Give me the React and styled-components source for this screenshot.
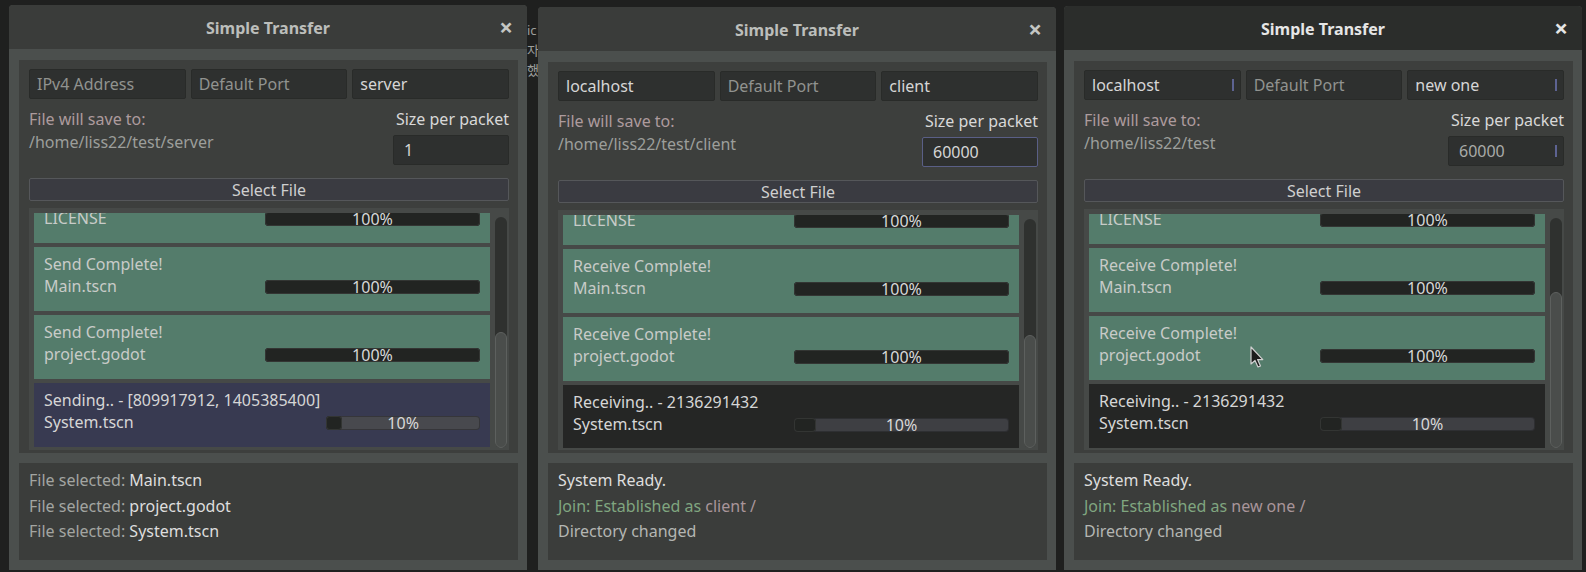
import React from "react"
import styled, { createGlobalStyle } from "styled-components"

const GlobalStyle = createGlobalStyle`
  html, body {
    margin: 0;
    padding: 0;
    background: #1f201f;
  }
  body {
    font-family: "Noto Sans", "Noto Sans CJK KR", sans-serif;
    font-size: 16px;
    color: #d0d0d0;
    overflow: hidden;
  }
  * {
    box-sizing: border-box;
  }
`

const Desktop = styled.div`
  display: flex;
  align-items: flex-start;
  width: 1586px;
  height: 572px;
  padding-left: 9px;
  background: #1f201f;
  overflow: hidden;
`

const Gap = styled.div`
  flex: none;
  width: ${p => p.$w}px;
  padding-top: 22px;
  display: flex;
  flex-direction: column;
  gap: 4px;
  font-size: 13px;
  line-height: 16px;
  color: #9c9e9b;
  overflow: hidden;
  white-space: nowrap;
`

const Window = styled.div`
  flex: none;
  width: 518px;
  height: ${p => 570 - p.$top}px;
  margin-top: ${p => p.$top}px;
  display: flex;
  flex-direction: column;
  background: #4b4f4d;
  border-radius: 4px 4px 0 0;
`

const TitleBar = styled.div`
  flex: none;
  height: 44px;
  display: grid;
  grid-template-columns: 1fr auto 1fr;
  align-items: center;
  background: ${p => (p.$active ? "#2b2d2b" : "#3a3c3a")};
  border-radius: 4px 4px 0 0;
`

const Title = styled.div`
  grid-column: 2;
  font-weight: 700;
  padding-top: 2px;
  color: ${p => (p.$active ? "#e6e6e6" : "#bcbebb")};
`

const Close = styled.div`
  justify-self: end;
  padding-right: 14px;
  font-size: 24px;
  font-weight: 700;
  line-height: 1;
  color: ${p => (p.$active ? "#e6e6e6" : "#c4c6c3")};
`

const Body = styled.div`
  flex: 1;
  min-height: 0;
  display: flex;
  flex-direction: column;
  gap: 10px;
  padding: 11px 9px 10px 10px;
`

const MainPanel = styled.div`
  flex: 1;
  min-height: 0;
  display: flex;
  flex-direction: column;
  padding: 9px 9px 3px 10px;
  background: #3d3f3d;
`

const EditRow = styled.div`
  display: grid;
  grid-template-columns: repeat(3, 1fr);
  gap: 5px;
`

const Edit = styled.div`
  height: 30px;
  display: flex;
  align-items: center;
  justify-content: space-between;
  padding: 0 6px 0 7px;
  background: #2e302f;
  border: 1px solid #292b29;
  border-radius: 2px;
  color: ${p => (p.$placeholder ? "#919390" : "#d6d6d6")};
  white-space: nowrap;
`

const Caret = styled.span`
  width: 2px;
  height: 12px;
  background: #5d6392;
`

const InfoRow = styled.div`
  margin-top: 9px;
  display: flex;
  justify-content: space-between;
  line-height: 23px;
`

const SaveInfo = styled.div`
  display: flex;
  flex-direction: column;
`

const SaveLabel = styled.div`
  color: #ad9b9d;
`

const SavePath = styled.div`
  color: #9c9e9b;
`

const PacketInfo = styled.div`
  display: flex;
  flex-direction: column;
  align-items: flex-end;
`

const PacketLabel = styled.div`
  color: #d8d8d8;
`

const SpinBox = styled(Edit)`
  width: 116px;
  margin-top: 4px;
  padding-left: 10px;
  color: ${p => (p.$dim ? "#a9aba8" : "#d6d6d6")};
  border-color: ${p => (p.$focus ? "#5a5f86" : "#292b29")};
`

const SelectButton = styled.div`
  margin-top: 13px;
  height: 23px;
  display: flex;
  align-items: center;
  justify-content: center;
  background: #3a3b41;
  border: 1px solid #55575a;
  border-radius: 2px;
  color: #cfcfcf;
`

const ListFrame = styled.div`
  flex: 1;
  min-height: 0;
  margin-top: 7px;
  display: flex;
  gap: 5px;
  padding: 5px 2px 2px 5px;
  background: #464947;
`

const Viewport = styled.div`
  flex: 1;
  min-width: 0;
  overflow: hidden;
`

const ItemList = styled.div`
  margin-top: -34px;
  display: flex;
  flex-direction: column;
  gap: 4px;
`

const itemColors = {
  done: "#547c6b",
  send: "#383a51",
  recv: "#252625",
}

const Item = styled.div`
  position: relative;
  flex: none;
  height: 64px;
  display: grid;
  grid-template-columns: 1fr 1fr;
  gap: 6px;
  padding: 0 10px;
  background: ${p => itemColors[p.$kind]};
`

const ItemText = styled.div`
  padding-top: 6px;
  line-height: 22px;
  color: ${p => (p.$kind === "done" ? "#c8cbc8" : "#d6d6d6")};
  white-space: nowrap;
`

const ItemBar = styled.div`
  padding-top: 33px;
`

const Progress = styled.div`
  display: grid;
  height: 14px;
  border-radius: 4px;
  background: ${p => (p.$kind === "send" ? "#48494e" : "#3e3f43")};
  box-shadow: inset 0 0 0 1px rgba(0, 0, 0, 0.25);
`

const Fill = styled.div`
  grid-area: 1 / 1;
  height: 14px;
  border-radius: 4px;
  background: #222422;
  box-shadow: inset 0 0 0 1px #333533;
`

const Percent = styled.div`
  grid-area: 1 / 1;
  align-self: center;
  text-align: center;
  line-height: 14px;
  color: #d8d8d8;
`

const Scrollbar = styled.div`
  flex: none;
  width: 12px;
  margin-top: 4px;
  display: flex;
  flex-direction: column;
  background: #2f312f;
  border-radius: 6px;
`

const Thumb = styled.div`
  flex: 1;
  margin-top: ${p => p.$offset}px;
  background: #4a4d4b;
  border: 1px solid #5d605e;
  border-radius: 6px;
`

const Cursor = styled.svg`
  position: absolute;
  left: ${p => p.$x}px;
  top: ${p => p.$y}px;
  width: 14px;
  height: 22px;
`

const LogPanel = styled.div`
  flex: none;
  height: 97px;
  padding: 5px 10px;
  background: #3b3d3b;
  line-height: 25.5px;
  white-space: nowrap;
`

const segColors = {
  dim: "#a3a5a2",
  strong: "#dedede",
  join: "#80a680",
  peer: "#a9959a",
  plain: "#b4b6b3",
}

const Seg = styled.span`
  color: ${p => segColors[p.$c]};
`

const sendItems = [
  { kind: "done", l1: "Send Complete!", l2: "LICENSE", pct: 100 },
  { kind: "done", l1: "Send Complete!", l2: "Main.tscn", pct: 100 },
  { kind: "done", l1: "Send Complete!", l2: "project.godot", pct: 100 },
  { kind: "send", l1: "Sending.. - [809917912, 1405385400]", l2: "System.tscn", pct: 10 },
]

const recvItems = [
  { kind: "done", l1: "Receive Complete!", l2: "LICENSE", pct: 100 },
  { kind: "done", l1: "Receive Complete!", l2: "Main.tscn", pct: 100 },
  { kind: "done", l1: "Receive Complete!", l2: "project.godot", pct: 100 },
  { kind: "recv", l1: "Receiving.. - 2136291432", l2: "System.tscn", pct: 10 },
]

const joinLog = name => [
  [{ t: "System Ready.", c: "strong" }],
  [
    { t: "Join: Established as ", c: "join" },
    { t: name + " /", c: "peer" },
  ],
  [{ t: "Directory changed", c: "plain" }],
]

const windows = [
  {
    top: 5,
    edits: [
      { text: "IPv4 Address", ph: true },
      { text: "Default Port", ph: true },
      { text: "server" },
    ],
    path: "/home/liss22/test/server",
    packet: "1",
    items: sendItems,
    thumb: 115,
    log: [
      [{ t: "File selected: ", c: "dim" }, { t: "Main.tscn", c: "strong" }],
      [{ t: "File selected: ", c: "dim" }, { t: "project.godot", c: "strong" }],
      [{ t: "File selected: ", c: "dim" }, { t: "System.tscn", c: "strong" }],
    ],
  },
  {
    top: 7,
    edits: [{ text: "localhost" }, { text: "Default Port", ph: true }, { text: "client" }],
    path: "/home/liss22/test/client",
    packet: "60000",
    focus: true,
    items: recvItems,
    thumb: 116,
    log: joinLog("client"),
  },
  {
    top: 6,
    active: true,
    edits: [
      { text: "localhost", caret: true },
      { text: "Default Port", ph: true },
      { text: "new one", caret: true },
    ],
    path: "/home/liss22/test",
    packet: "60000",
    dim: true,
    caret: true,
    items: recvItems,
    thumb: 74,
    cursor: { item: 2, x: 161, y: 30 },
    log: joinLog("new one"),
  },
]

const TransferWindow = ({ w }) => (
  <Window $top={w.top}>
    <TitleBar $active={w.active}>
      <Title $active={w.active}>Simple Transfer</Title>
      <Close $active={w.active}>×</Close>
    </TitleBar>
    <Body>
      <MainPanel>
        <EditRow>
          {w.edits.map((e, i) => (
            <Edit key={i} $placeholder={e.ph}>
              {e.text}
              {e.caret && <Caret />}
            </Edit>
          ))}
        </EditRow>
        <InfoRow>
          <SaveInfo>
            <SaveLabel>File will save to:</SaveLabel>
            <SavePath>{w.path}</SavePath>
          </SaveInfo>
          <PacketInfo>
            <PacketLabel>Size per packet</PacketLabel>
            <SpinBox $focus={w.focus} $dim={w.dim}>
              {w.packet}
              {w.caret && <Caret />}
            </SpinBox>
          </PacketInfo>
        </InfoRow>
        <SelectButton>Select File</SelectButton>
        <ListFrame>
          <Viewport>
            <ItemList>
              {w.items.map((it, i) => (
                <Item key={i} $kind={it.kind}>
                  <ItemText $kind={it.kind}>
                    <div>{it.l1}</div>
                    <div>{it.l2}</div>
                  </ItemText>
                  <ItemBar>
                    <Progress $kind={it.kind}>
                      <Fill style={{ width: `${it.pct}%` }} />
                      <Percent>{it.pct}%</Percent>
                    </Progress>
                  </ItemBar>
                  {w.cursor && w.cursor.item === i && (
                    <Cursor $x={w.cursor.x} $y={w.cursor.y} viewBox="0 0 14 22">
                      <path
                        d="M1 1 L1 18 L5 14.5 L8 21 L10.5 20 L7.6 13.6 L12.8 13.6 Z"
                        fill="#1c1d1c"
                        stroke="#d0d0d0"
                        strokeWidth="1.2"
                        strokeLinejoin="round"
                      />
                    </Cursor>
                  )}
                </Item>
              ))}
            </ItemList>
          </Viewport>
          <Scrollbar>
            <Thumb $offset={w.thumb} />
          </Scrollbar>
        </ListFrame>
      </MainPanel>
      <LogPanel>
        {w.log.map((line, i) => (
          <div key={i}>
            {line.map((s, j) => (
              <Seg key={j} $c={s.c}>
                {s.t}
              </Seg>
            ))}
          </div>
        ))}
      </LogPanel>
    </Body>
  </Window>
)

export default function App() {
  return (
    <>
      <GlobalStyle />
      <Desktop>
        <TransferWindow w={windows[0]} />
        <Gap $w={11}>
          <span>ic</span>
          <span>자</span>
          <span>했</span>
        </Gap>
        <TransferWindow w={windows[1]} />
        <Gap $w={8} />
        <TransferWindow w={windows[2]} />
      </Desktop>
    </>
  )
}
